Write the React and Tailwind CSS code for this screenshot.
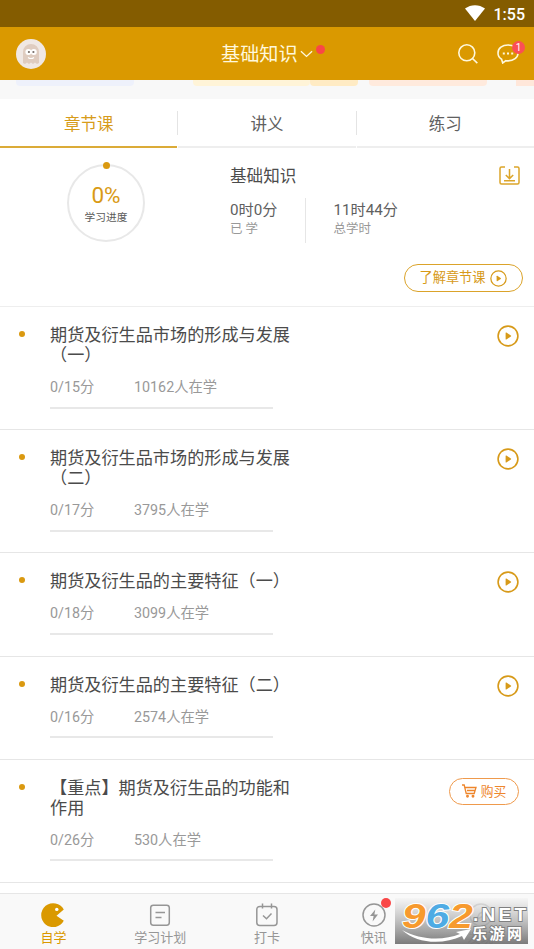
import React, { useState } from 'react';

const lessons = [
  { title: '期货及衍生品市场的形成与发展（一）', minutes: 15, students: 10162 },
  { title: '期货及衍生品市场的形成与发展（二）', minutes: 17, students: 3795 },
  { title: '期货及衍生品的主要特征（一）', minutes: 18, students: 3099 },
  { title: '期货及衍生品的主要特征（二）', minutes: 16, students: 2574 },
  { title: '【重点】期货及衍生品的功能和作用', minutes: 26, students: 530, locked: true }
];

const tabs = ['章节课', '讲义', '练习'];

const PlayIcon = ({ className }) => (
  <svg viewBox="0 0 22 22" fill="none" className={className}>
    <circle cx="11" cy="11" r="9.9" stroke="currentColor" strokeWidth="1.6" />
    <path d="M8.6 8Q8.6 7.2 9.4 7.6L13.8 10.4Q14.6 11 13.8 11.6L9.4 14.4Q8.6 14.8 8.6 14z" fill="currentColor" />
  </svg>
);

const StatusBar = () => (
  <div className="h-[27px] bg-[#845c00] flex items-center justify-end pr-[9px] text-white">
    <svg viewBox="0 0 20 16" className="w-5 h-4 mr-[9px] -mt-0.5" fill="currentColor">
      <path d="M0 3.6C6-1 14-1 20 3.6L10 16z" />
    </svg>
    <span className="text-[16px] leading-none font-medium pt-[3px]">1:55</span>
  </div>
);

const Header = () => (
  <header className="h-[53px] bg-[#da9900] flex items-center text-[#fff8dc] px-4">
    <svg viewBox="0 0 30 30" className="w-[30px] h-[30px]">
      <circle cx="15" cy="15" r="15" fill="#f0e8e4" />
      <path d="M7 24V13a8 8 0 0 1 16 0v11l-2 1-2-1.5-2 1.5-2-1.5-2 1.5-2-1.5-2 1.5z" fill="#dfccc0" />
      <circle cx="12.4" cy="13" r="3" fill="#fff" />
      <circle cx="17.8" cy="13" r="3" fill="#fff" />
      <circle cx="12.9" cy="13" r="1.1" fill="#776d68" />
      <circle cx="17.4" cy="13" r="1.1" fill="#776d68" />
      <path d="M12 18.4q3 2.2 6 0" stroke="#fff" strokeWidth="1.2" fill="none" />
    </svg>
    <div className="flex-1 flex items-center pl-[175px]">
      <span className="text-[19.2px] leading-none pt-0.5">基础知识</span>
      <svg viewBox="0 0 14 8" className="w-[13px] h-2 ml-0.5 mt-0.5" fill="none" stroke="currentColor" strokeWidth="1.4">
        <path d="M1 1l6 5.6L13 1" />
      </svg>
      <span className="w-[9px] h-[9px] rounded-full bg-[#f94747] ml-[3px] -mt-2" />
    </div>
    <svg viewBox="0 0 20 20" className="w-5 h-5 mr-[19px] mt-px" fill="none" stroke="currentColor" strokeWidth="1.6">
      <circle cx="8.8" cy="8.8" r="8" />
      <path d="M14.5 14.5l4.8 4.6" />
    </svg>
    <div className="relative w-[22px] h-5 -mr-px">
      <svg viewBox="0 0 22 20" className="w-[22px] h-5" fill="none" stroke="currentColor" strokeWidth="1.6">
        <path d="M11 1C5.4 1 1 4.3 1 9c0 2.7 1.4 4.9 3.6 6.2L5.7 19l3.2-2.3q1 .2 2.1.2c5.6 0 10-3.2 10-7.9S16.6 1 11 1z" />
        <path d="M5.8 9.5h2M10 9.5h2M14.2 9.5h2" strokeWidth="2.2" />
      </svg>
      <span className="absolute -top-[3px] left-[15px] w-[13px] h-[13px] rounded-full bg-[#fb4f55] text-white text-[10px] leading-[13px] text-center">1</span>
    </div>
  </header>
);

const Tabs = ({ active, onChange }) => (
  <div className="h-[49px] bg-white flex">
    {tabs.map((tab, i) => (
      <React.Fragment key={tab}>
        {i > 0 && <span className="w-px h-6 mt-3 bg-[#e4e4e4]" />}
        <button
          onClick={() => onChange(i)}
          className={`flex-1 border-b-2 pt-1.5 text-[16.5px] ${
            i === active ? 'text-[#d79c1b] border-[#dbab38]' : 'text-[#606060] border-[#eeeeee]'
          }`}
        >
          {tab}
        </button>
      </React.Fragment>
    ))}
  </div>
);

const Summary = () => (
  <section className="h-[159px] border-b border-[#eeeeee] flex">
    <div className="relative w-[78px] h-[78px] ml-[67px] mt-4 rounded-full border-2 border-[#e8e8e8] flex flex-col items-center">
      <span className="absolute -top-1 left-[33.5px] w-[7px] h-[7px] rounded-full bg-[#da9910]" />
      <span className="text-[22.5px] leading-6 text-[#d99a14] mt-[17px]">0%</span>
      <span className="text-[10.7px] leading-4 text-[#5a5a5a] mt-[3px]">学习进度</span>
    </div>
    <div className="flex-1 ml-[85px] pr-[11px]">
      <div className="flex justify-between mt-[17px]">
        <h2 className="text-[16.6px] leading-[22px] text-[#4c4c4c] pt-px">基础知识</h2>
        <svg viewBox="0 0 21 19" className="w-[21px] h-[19px] mt-px mr-[3px]" fill="none" stroke="#dca52a" strokeWidth="1.5">
          <path d="M6 1H2.5Q1 1 1 2.5v14Q1 18 2.5 18h16q1.5 0 1.5-1.5v-14Q20 1 18.5 1H15" />
          <path d="M10.5 3v9.5M6.8 9l3.7 3.6L14.2 9M5 14.8h11" />
        </svg>
      </div>
      <div className="flex mt-2.5">
        <div className="w-[76px] h-[45px] border-r border-[#e6e6e6]">
          <p className="text-[15.2px] leading-[22px] text-[#606060] pt-px">0时0分</p>
          <p className="text-[12.5px] leading-4 text-[#999999]">已 学</p>
        </div>
        <div className="ml-[27.5px]">
          <p className="text-[15.2px] leading-[22px] text-[#606060] pt-px">11时44分</p>
          <p className="text-[12.5px] leading-4 text-[#999999]">总学时</p>
        </div>
      </div>
      <button className="w-[119px] h-[28px] ml-auto mt-[21px] rounded-full border-[1.5px] border-[#dba32a] text-[#d79a19] text-[13.2px] flex items-center justify-center">
        了解章节课
        <PlayIcon className="w-[17px] h-[17px] ml-[5px]" />
      </button>
    </div>
  </section>
);

const Lesson = ({ lesson }) => (
  <li className="flex items-start border-b border-[#e6e6e6] pt-[18px] pb-[20.5px]">
    <span className="w-1.5 h-1.5 rounded-full bg-[#da9910] ml-[19px] mt-1.5" />
    <div className="w-[244px] ml-[25px]">
      <h3 className="text-[17.15px] leading-5 text-[#4b4b4b]">{lesson.title}</h3>
      <div className="flex text-[14.3px] leading-5 text-[#999999] mt-3">
        <span className="w-[84px]">0/{lesson.minutes}分</span>
        <span>{lesson.students}人在学</span>
      </div>
      <div className="w-[223px] h-0.5 bg-[#e8e8e8] mt-[9.7px]" />
    </div>
    {lesson.locked ? (
      <button className="w-[70px] h-[27px] ml-auto mr-[15px] rounded-full border border-[#ef9a4c] text-[#ee862c] text-[12.8px] flex items-center justify-center">
        <svg viewBox="0 0 15 14" className="w-[15px] h-[14px] mr-1" fill="none" stroke="currentColor" strokeWidth="1.3">
          <path d="M0 1h2.2l2 8.5h8L14 3.5H3M5 6.5h7.5" />
          <circle cx="5.5" cy="12.3" r=".8" />
          <circle cx="11" cy="12.3" r=".8" />
        </svg>
        购买
      </button>
    ) : (
      <PlayIcon className="w-[22px] h-[22px] ml-auto mr-[15px] text-[#d79a19]" />
    )}
  </li>
);

const navItems = [
  {
    label: '自学',
    icon: (
      <>
        <path d="M22.8 6.5A12 12 0 1 0 22.8 17.8L15.5 12.7z" fill="currentColor" stroke="none" />
        <circle cx="15.8" cy="6.4" r="1.7" fill="#fff" stroke="none" />
      </>
    )
  },
  {
    label: '学习计划',
    icon: (
      <>
        <rect x="2.7" y="2.2" width="18.6" height="20" rx="2.6" />
        <path d="M7.5 9.5h9.5M7.5 14.5h6" />
      </>
    )
  },
  {
    label: '打卡',
    icon: (
      <>
        <path d="M5 3.5Q1.8 3.5 1.8 6.5V19.5q0 3 3 3H19q3 0 3-3V6.5q0-3-3-3M5 3.5H19M7.5.5v5M16.5.5v5" />
        <path d="M8 12.5l3.5 3.3 5-5.3" />
      </>
    )
  },
  {
    label: '快讯',
    badge: true,
    icon: (
      <>
        <circle cx="12" cy="12" r="11" />
        <path d="M13.3 6.5L8 13h3.6l-1 5.5L16 11.6h-3.6z" fill="currentColor" stroke="none" />
      </>
    )
  },
  {
    label: '发现',
    icon: (
      <>
        <circle cx="12" cy="12" r="11" />
        <path d="M16.5 7.5l-3 6-6 3 3-6z" />
      </>
    )
  }
];

const Watermark = () => (
  <svg viewBox="0 0 133 46" className="absolute left-[395px] top-1 w-[133px] h-[46px] overflow-visible">
    <defs>
      <linearGradient id="wm" x1="0" y1="0" x2="0" y2="1">
        <stop offset="0" stopColor="#f4f4f4" stopOpacity="0.75" />
        <stop offset="0.5" stopColor="#b6b6b6" stopOpacity="0.85" />
        <stop offset="1" stopColor="#707070" stopOpacity="0.92" />
      </linearGradient>
    </defs>
    <rect width="133" height="46" fill="url(#wm)" />
    <path d="M7 32C25 42 48 43 65 36l-4-2 15-3-7 11-2-4C48 47 22 46 7 32z" fill="#fff" />
    <g
      transform="translate(7 30) scale(1.18 1)"
      fontFamily="Liberation Sans, sans-serif"
      fontWeight="bold"
      fontStyle="italic"
      fontSize="36"
      stroke="#fff"
      strokeWidth="2"
      paintOrder="stroke"
    >
      <text>
        <tspan fill="#f79a2e">9</tspan>
        <tspan fill="#4eabe4">6</tspan>
        <tspan fill="#f79a2e">2</tspan>
      </text>
    </g>
    <g fill="#fff" stroke="#808080" strokeWidth="1.8" paintOrder="stroke" fontWeight="bold">
      <text x="78" y="22.5" fontFamily="Liberation Sans, sans-serif" fontSize="19" textLength="53">.NET</text>
      <text x="77" y="41" fontFamily="Noto Sans CJK SC, sans-serif" fontSize="15" textLength="50">乐游网</text>
    </g>
  </svg>
);

const BottomNav = () => (
  <nav className="relative h-14 bg-[#f9f9f9] border-t border-[#e6e6e6] flex">
    {navItems.map((item, i) => (
      <button
        key={item.label}
        className={`relative flex-1 flex flex-col items-center pt-[9px] ${i === 0 ? 'text-[#da9900]' : 'text-[#969696]'}`}
      >
        <svg viewBox="0 0 24 24" className="w-6 h-6" fill="none" stroke="currentColor" strokeWidth="1.5">
          {item.icon}
        </svg>
        <span className="text-[13px] leading-5 pt-px">{item.label}</span>
        {item.badge && <span className="absolute top-1 left-[61px] w-2.5 h-2.5 rounded-full bg-[#f94747]" />}
      </button>
    ))}
    <Watermark />
  </nav>
);

const App = () => {
  const [activeTab, setActiveTab] = useState(0);

  return (
    <div className="w-[534px] h-[949px] overflow-hidden bg-white flex flex-col font-['Roboto','Noto_Sans_CJK_SC',sans-serif]">
      <StatusBar />
      <Header />
      {/* Bottom edge of the banner cards scrolled under the header */}
      <div className="h-[19px] bg-[#f8f8f8] flex pl-4">
        <div className="w-[118px] h-1.5 rounded-b bg-[#eef1fb]" />
        <div className="w-[117px] h-1.5 ml-[59px] rounded-b bg-[#fff4d8]" />
        <div className="w-[48px] h-1.5 rounded-b bg-[#ffebc4]" />
        <div className="w-[118px] h-1.5 ml-[11px] rounded-b bg-[#ffeadd]" />
        <div className="flex-1 h-1.5 ml-[29px] bg-[#ffe7da]" />
      </div>
      <Tabs active={activeTab} onChange={setActiveTab} />
      <Summary />
      <ul className="flex-1 overflow-hidden">
        {lessons.map((lesson) => (
          <Lesson key={lesson.title} lesson={lesson} />
        ))}
      </ul>
      <BottomNav />
    </div>
  );
};

export default App;
